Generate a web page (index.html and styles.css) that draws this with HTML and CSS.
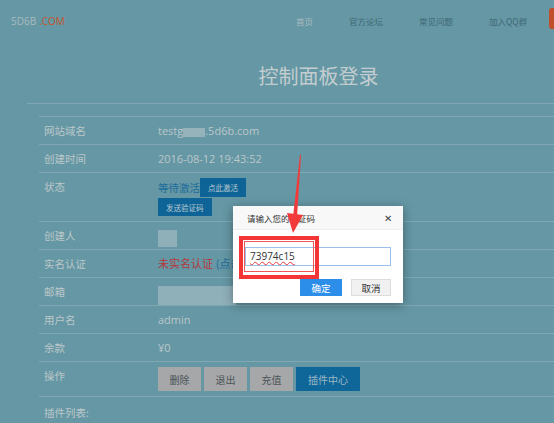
FILE: index.html
```html
<!DOCTYPE html>
<html lang="zh-CN">
<head>
    <meta charset="UTF-8">
    <title>控制面板登录</title>
    <link rel="stylesheet" href="styles.css">
</head>
<body>
    <div class="header">
        <div class="logo">5D6B<span class="logo-com">.COM</span></div>
        <div class="nav">
            <a class="nav-item nav-home">首页</a>
            <a class="nav-item">官方论坛</a>
            <a class="nav-item">常见问题</a>
            <a class="nav-item">加入QQ群</a>
        </div>
        <div class="nav-btn"></div>
    </div>

    <div class="main">
        <h1 class="title">控制面板登录</h1>
        <div class="panel">
            <div class="row"><div class="label">网站域名</div><div class="value">testg<span class="blur-inline"></span>.5d6b.com</div></div>
            <div class="row"><div class="label">创建时间</div><div class="value">2016-08-12 19:43:52</div></div>
            <div class="row row-status">
                <div class="label">状态</div>
                <div class="value">
                    <div class="status-line"><span class="status-text">等待激活</span><button class="btn-dark">点此激活</button></div>
                    <button class="btn-dark btn-send">发送验证码</button>
                </div>
            </div>
            <div class="row"><div class="label">创建人</div><div class="value"><span class="blur blur-small"></span></div></div>
            <div class="row"><div class="label">实名认证</div><div class="value"><span class="red">未实名认证</span> <span class="link">(点击</span></div></div>
            <div class="row"><div class="label">邮箱</div><div class="value"><span class="blur blur-wide"></span></div></div>
            <div class="row"><div class="label">用户名</div><div class="value">admin</div></div>
            <div class="row"><div class="label">余款</div><div class="value">¥0</div></div>
            <div class="row row-ops">
                <div class="label">操作</div>
                <div class="value ops">
                    <button class="btn-grey">删除</button>
                    <button class="btn-grey">退出</button>
                    <button class="btn-grey">充值</button>
                    <button class="btn-blue">插件中心</button>
                </div>
            </div>
            <div class="row row-last"><div class="label">插件列表:</div></div>
        </div>
    </div>

    <div class="dialog">
        <div class="dialog-head">
            <span>请输入您的验证码</span>
            <span class="close">&#x2715;</span>
        </div>
        <div class="dialog-body">
            <div class="input"><span class="code">73974c15</span></div>
            <div class="dialog-btns">
                <button class="btn-ok">确定</button>
                <button class="btn-cancel">取消</button>
            </div>
        </div>
    </div>

    <div class="mark"><div class="mark-inner"></div></div>
    <svg class="arrow" width="30" height="90" viewBox="0 0 30 90">
        <polygon points="21,0 22,0 18,62 14,62" fill="#f23a3a"/>
        <polygon points="8,58 24,60 14,78" fill="#f23a3a"/>
    </svg>
</body>
</html>
```

FILE: styles.css
```css
body {
    margin: 0;
    background: #6597a4;
    font-family: "Open Sans", "Noto Sans CJK SC", sans-serif;
    color: #bcc7ca;
    position: relative;
    height: 423px;
    overflow: hidden;
}

.header {
    height: 42px;
    display: flex;
    align-items: center;
    padding-left: 11px;
    position: relative;
}

.logo {
    font-size: 10px;
    color: #a9babf;
    margin-top: -1px;
    width: 285px;
    flex-shrink: 0;
    white-space: nowrap;
}

.logo-com {
    color: #c2582e;
    margin-left: 3px;
}

.nav {
    display: flex;
    flex-shrink: 0;
    white-space: nowrap;
    margin-top: -1px;
}

.nav-item {
    font-size: 8.5px;
    color: #3f6874;
    margin-right: 35px;
    font-family: "Noto Sans CJK SC", sans-serif;
}

.nav-item:nth-child(2) { margin-right: 36px; }
.nav-item:nth-child(3) { margin-right: 36px; }

.nav-home {
    color: #aabcc1;
    margin-right: 36px;
}

.nav-btn {
    position: absolute;
    right: -6px;
    top: 8px;
    width: 11px;
    height: 21px;
    border-radius: 3px;
    background: #c04e2b;
}

.main {
    margin-left: 27px;
}

.title {
    margin: 0;
    height: 61px;
    border-bottom: 1px solid #7fa8b3;
    font-size: 20px;
    font-weight: normal;
    color: #c3cdd0;
    text-align: center;
    line-height: 68px;
    padding-left: 56px;
    font-family: "Noto Sans CJK SC", sans-serif;
}

.panel {
    margin: 12px 0 0 12px;
}

.row {
    display: flex;
    height: 27px;
    border-top: 1px solid #7fa8b3;
    font-size: 10.5px;
    line-height: 27px;
}

.label {
    width: 119px;
    padding-left: 5px;
    box-sizing: border-box;
    flex-shrink: 0;
    font-family: "Noto Sans CJK SC", sans-serif;
}

.value {
    font-size: 11px;
}

.blur-inline {
    display: inline-block;
    width: 22px;
    height: 9px;
    background: #96b3bb;
    vertical-align: middle;
}

.row-status {
    height: 48px;
}

.row-status .label {
    line-height: 28px;
}

.status-line {
    display: flex;
    align-items: center;
    height: 20px;
    margin-top: 4px;
}

.status-text {
    color: #1d6c9b;
    font-size: 10.5px;
    font-family: "Noto Sans CJK SC", sans-serif;
}

.btn-dark {
    background: #0e6496;
    border: none;
    color: #b9c9d1;
    font-size: 7.5px;
    height: 19px;
    padding: 0 8px;
    font-family: "Noto Sans CJK SC", sans-serif;
}

.btn-send {
    display: block;
    height: 18px;
    margin-top: 1px;
    padding: 0 8px;
}

.red {
    color: #b4383c;
    font-family: "Noto Sans CJK SC", sans-serif;
}

.link {
    color: #1d6c9b;
    font-family: "Noto Sans CJK SC", sans-serif;
}

.blur {
    display: inline-block;
    background: #8fb0b9;
    vertical-align: top;
}

.blur-small {
    width: 19px;
    height: 17px;
    margin-top: 8px;
}

.blur-wide {
    width: 78px;
    height: 19px;
    margin-top: 8px;
}

.row-ops {
    height: 34px;
}

.row-ops .label {
    line-height: 28px;
}

.ops {
    display: flex;
    gap: 3px;
    padding-top: 5px;
}

.btn-grey, .btn-blue {
    height: 24px;
    border: none;
    font-size: 10px;
    padding: 0;
    width: 43px;
    font-family: "Noto Sans CJK SC", sans-serif;
}

.btn-grey {
    background: #a5a7a8;
    color: #4b5559;
}

.btn-blue {
    background: #0e6699;
    color: #9fb8c5;
    width: 64px;
}

.row-last {
    height: 30px;
    line-height: 32px;
}

.dialog {
    position: absolute;
    left: 233px;
    top: 206px;
    width: 170px;
    height: 97px;
    background: #fff;
    box-shadow: 0 2px 10px rgba(0, 0, 0, 0.35);
    font-family: "Noto Sans CJK SC", sans-serif;
}

.dialog-head {
    height: 23px;
    background: #f8f8f8;
    border-bottom: 1px solid #eee;
    display: flex;
    justify-content: space-between;
    align-items: center;
    padding: 0 11px 0 14px;
    font-size: 8.5px;
    color: #333;
}

.close {
    font-size: 10px;
    color: #444;
}

.dialog-body {
    padding: 17px 12px 0 12px;
}

.input {
    height: 17px;
    border: 1px solid #9cc0ee;
    line-height: 17px;
    padding-left: 4px;
    font-size: 10px;
    color: #333;
    font-family: "Open Sans", sans-serif;
}

.code {
    text-decoration: underline wavy #e53838;
    text-decoration-thickness: 1px;
}

.dialog-btns {
    display: flex;
    justify-content: flex-end;
    gap: 9px;
    margin-top: 13px;
}

.btn-ok, .btn-cancel {
    height: 17px;
    font-size: 9.5px;
    padding: 0;
    font-family: "Noto Sans CJK SC", sans-serif;
}

.btn-ok {
    width: 42px;
    background: #2c8ee8;
    color: #fff;
    border: none;
}

.btn-cancel {
    width: 40px;
    background: #f1f1f1;
    border: 1px solid #ddd;
    color: #333;
}

.mark {
    position: absolute;
    left: 239px;
    top: 236px;
    width: 80px;
    height: 43px;
    border: 4px solid #f43535;
    box-sizing: border-box;
}

.mark-inner {
    position: absolute;
    left: 1px;
    top: 1px;
    right: 1px;
    bottom: 3px;
    border: 1px solid #f25555;
}

.arrow {
    position: absolute;
    left: 279px;
    top: 155px;
}
```
